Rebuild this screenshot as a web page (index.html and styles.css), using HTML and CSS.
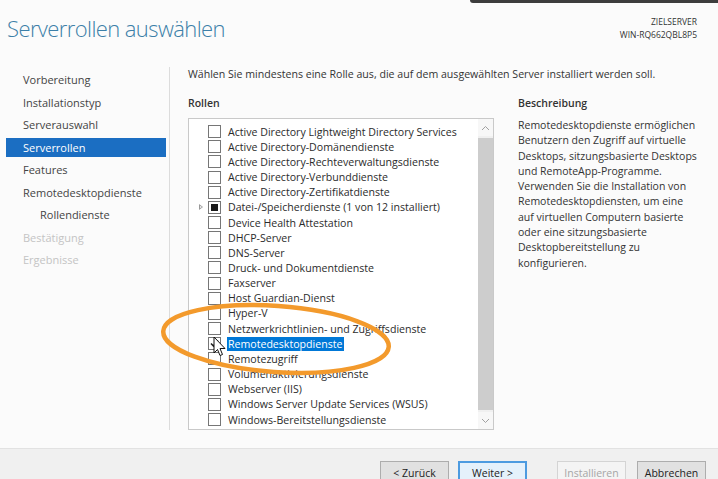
FILE: index.html
```html
<!DOCTYPE html>
<html lang="de">
<head>
    <meta charset="UTF-8">
    <meta name="viewport" content="width=device-width, initial-scale=1.0">
    <title>Assistent zum Hinzufügen von Rollen und Features</title>
    <link rel="stylesheet" href="styles.css">
</head>
<body>
    <div class="window">
        <div class="video-bar"></div>

        <div class="header">
            <h1>Serverrollen auswählen</h1>
            <div class="target">
                <div>ZIELSERVER</div>
                <div>WIN-RQ662QBL8P5</div>
            </div>
        </div>

        <div class="main">
            <div class="steps">
                <div class="step">Vorbereitung</div>
                <div class="step">Installationstyp</div>
                <div class="step">Serverauswahl</div>
                <div class="step active">Serverrollen</div>
                <div class="step">Features</div>
                <div class="step">Remotedesktopdienste</div>
                <div class="step sub">Rollendienste</div>
                <div class="step disabled">Bestätigung</div>
                <div class="step disabled">Ergebnisse</div>
            </div>

            <div class="content">
                <p class="intro">Wählen Sie mindestens eine Rolle aus, die auf dem ausgewählten Server installiert werden soll.</p>

                <div class="columns">
                    <div class="roles">
                        <h2>Rollen</h2>
                        <div class="listbox">
                            <ul class="role-list">
                                <li class="role"><span class="expander"></span><span class="check"></span><span class="label">Active Directory Lightweight Directory Services</span></li>
                                <li class="role"><span class="expander"></span><span class="check"></span><span class="label">Active Directory-Domänendienste</span></li>
                                <li class="role"><span class="expander"></span><span class="check"></span><span class="label">Active Directory-Rechteverwaltungsdienste</span></li>
                                <li class="role"><span class="expander"></span><span class="check"></span><span class="label">Active Directory-Verbunddienste</span></li>
                                <li class="role"><span class="expander"></span><span class="check"></span><span class="label">Active Directory-Zertifikatdienste</span></li>
                                <li class="role"><span class="expander has-children"></span><span class="check partial"></span><span class="label">Datei-/Speicherdienste (1 von 12 installiert)</span></li>
                                <li class="role"><span class="expander"></span><span class="check"></span><span class="label">Device Health Attestation</span></li>
                                <li class="role"><span class="expander"></span><span class="check"></span><span class="label">DHCP-Server</span></li>
                                <li class="role"><span class="expander"></span><span class="check"></span><span class="label">DNS-Server</span></li>
                                <li class="role"><span class="expander"></span><span class="check"></span><span class="label">Druck- und Dokumentdienste</span></li>
                                <li class="role"><span class="expander"></span><span class="check"></span><span class="label">Faxserver</span></li>
                                <li class="role"><span class="expander"></span><span class="check"></span><span class="label">Host Guardian-Dienst</span></li>
                                <li class="role"><span class="expander"></span><span class="check"></span><span class="label">Hyper-V</span></li>
                                <li class="role"><span class="expander"></span><span class="check"></span><span class="label">Netzwerkrichtlinien- und Zugriffsdienste</span></li>
                                <li class="role selected"><span class="expander"></span><span class="check checked">
                                    <svg viewBox="0 0 11 11" width="11" height="11"><path d="M2 5.5 L4.5 8 L9 2.5" fill="none" stroke="#222" stroke-width="1.6"/></svg>
                                </span><span class="label">Remotedesktopdienste</span></li>
                                <li class="role"><span class="expander"></span><span class="check"></span><span class="label">Remotezugriff</span></li>
                                <li class="role"><span class="expander"></span><span class="check"></span><span class="label">Volumenaktivierungsdienste</span></li>
                                <li class="role"><span class="expander"></span><span class="check"></span><span class="label">Webserver (IIS)</span></li>
                                <li class="role"><span class="expander"></span><span class="check"></span><span class="label">Windows Server Update Services (WSUS)</span></li>
                                <li class="role"><span class="expander"></span><span class="check"></span><span class="label">Windows-Bereitstellungsdienste</span></li>
                            </ul>
                            <div class="scrollbar">
                                <div class="scroll-arrow">
                                    <svg viewBox="0 0 9 6" width="9" height="6"><path d="M1 5 L4.5 1.5 L8 5" fill="none" stroke="#a0a0a0" stroke-width="1"/></svg>
                                </div>
                                <div class="scroll-thumb"></div>
                                <div class="scroll-arrow">
                                    <svg viewBox="0 0 9 6" width="9" height="6"><path d="M1 1 L4.5 4.5 L8 1" fill="none" stroke="#a0a0a0" stroke-width="1"/></svg>
                                </div>
                            </div>
                        </div>
                    </div>

                    <div class="description">
                        <h2>Beschreibung</h2>
                        <p>Remotedesktopdienste ermöglichen Benutzern den Zugriff auf virtuelle Desktops, sitzungsbasierte Desktops und RemoteApp-Programme. Verwenden Sie die Installation von Remotedesktopdiensten, um eine auf virtuellen Computern basierte oder eine sitzungsbasierte Desktopbereitstellung zu konfigurieren.</p>
                    </div>
                </div>
            </div>
        </div>

        <div class="footer">
            <button class="btn">&lt; Zurück</button>
            <button class="btn default">Weiter &gt;</button>
            <button class="btn disabled install">Installieren</button>
            <button class="btn cancel">Abbrechen</button>
        </div>

        <!-- annotation drawn over the screenshot -->
        <svg class="markup" width="718" height="479" viewBox="0 0 718 479">
            <ellipse cx="276" cy="339" rx="113" ry="33" transform="rotate(4 276 339)" fill="none" stroke="#f39a2c" stroke-width="4.5"/>
            <path d="M214 337 L214 353 L217.5 349.5 L220 355.5 L222.5 354.5 L220 348.5 L225 348.5 Z" fill="#fff" stroke="#111" stroke-width="1"/>
        </svg>
    </div>
</body>
</html>
```

FILE: styles.css
```css
* {
    margin: 0;
    padding: 0;
    box-sizing: border-box;
}

body {
    background: #fbfbfb;
    font-family: 'Open Sans', 'Noto Sans', 'DejaVu Sans', sans-serif;
    color: #2b2b2b;
}

.window {
    position: relative;
    width: 718px;
    height: 479px;
    overflow: hidden;
    display: flex;
    flex-direction: column;
}

.video-bar {
    position: absolute;
    top: 0;
    left: 470px;
    width: 260px;
    height: 3px;
    background: #3d3d3d;
    border-bottom-left-radius: 3px;
}

.header {
    height: 67px;
    display: flex;
    justify-content: space-between;
    padding: 13px 21px 0 7px;
}

.header h1 {
    font-family: 'Open Sans', sans-serif;
    font-weight: 300;
    font-size: 22px;
    letter-spacing: -0.6px;
    color: #3c7fa8;
    line-height: 30px;
}

.target {
    text-align: right;
    font-size: 8.5px;
    line-height: 13px;
    color: #333;
    padding-top: 2px;
}

.main {
    display: flex;
    height: 363px;
}

.steps {
    width: 170px;
    border-right: 1px solid #dcdcdc;
    padding: 3px 3px 0 6px;
}

.step {
    height: 19px;
    line-height: 19px;
    margin-bottom: 3.5px;
    padding-left: 17px;
    font-size: 11px;
    color: #444;
}

.step.active {
    background: #1b6ec2;
    color: #fff;
}

.step.sub {
    padding-left: 34px;
}

.step.disabled {
    color: #c4c4c4;
}

.content {
    flex: 1;
    padding-left: 18px;
}

.intro {
    font-size: 10.6px;
    line-height: 14px;
    color: #333;
}

.columns {
    display: flex;
    gap: 24px;
    margin-top: 15px;
}

.roles h2,
.description h2 {
    font-size: 10.5px;
    font-weight: 600;
    line-height: 14px;
    color: #333;
    margin-bottom: 8px;
}

.roles {
    width: 306px;
}

.listbox {
    display: flex;
    height: 312px;
    border: 1px solid #c9c9c9;
    background: #fff;
}

.role-list {
    flex: 1;
    list-style: none;
    padding: 5px 0 0 7px;
}

.role {
    display: flex;
    align-items: center;
    height: 15.16px;
    font-size: 10.6px;
    color: #2b2b2b;
    white-space: nowrap;
}

.expander {
    width: 12px;
    height: 13px;
    position: relative;
}

.expander.has-children::before {
    content: '';
    position: absolute;
    left: 3px;
    top: 3px;
    border-left: 4px solid #999;
    border-top: 3.5px solid transparent;
    border-bottom: 3.5px solid transparent;
}

.expander.has-children::after {
    content: '';
    position: absolute;
    left: 4px;
    top: 5px;
    border-left: 2px solid #fff;
    border-top: 1.5px solid transparent;
    border-bottom: 1.5px solid transparent;
}

.check {
    width: 13px;
    height: 13px;
    border: 1px solid #767676;
    background: #fff;
    margin-right: 7px;
    display: flex;
    align-items: center;
    justify-content: center;
    flex-shrink: 0;
}

.check.partial::after {
    content: '';
    width: 7px;
    height: 7px;
    background: #1a1a1a;
}

.label {
    padding: 0 2px 0 1px;
    line-height: 14px;
    margin-left: -1px;
}

.selected .label {
    background: #0078d7;
    color: #fff;
}

.scrollbar {
    width: 15px;
    display: flex;
    flex-direction: column;
    background: #f0f0f0;
}

.scroll-arrow {
    height: 17px;
    display: flex;
    align-items: center;
    justify-content: center;
    background: #f7f7f7;
}

.scroll-thumb {
    flex: 1;
    margin: 2px 0;
    background: #cdcdcd;
}

.description {
    width: 182px;
}

.description p {
    font-size: 10.5px;
    line-height: 15.3px;
    color: #333;
}

.footer {
    margin-top: auto;
    height: 31px;
    border-top: 1px solid #e2e2e2;
    background: #f0f0f0;
    display: flex;
    justify-content: flex-end;
    align-items: flex-start;
    padding: 12px 12px 0 0;
}

.btn {
    width: 69px;
    height: 24px;
    margin-left: 9px;
    font-family: 'Open Sans', sans-serif;
    font-size: 10.5px;
    color: #222;
    background: #e1e1e1;
    border: 1px solid #adadad;
}

.btn.default {
    border: 2px solid #4d9be0;
    background: #e5f1fb;
}

.btn.install {
    margin-left: 30px;
}

.btn.cancel {
    margin-left: 11px;
}

.btn.disabled {
    color: #a6a6a6;
    background: #f4f4f4;
    border-color: #d4d4d4;
}

.markup {
    position: absolute;
    top: 0;
    left: 0;
    pointer-events: none;
}
```
